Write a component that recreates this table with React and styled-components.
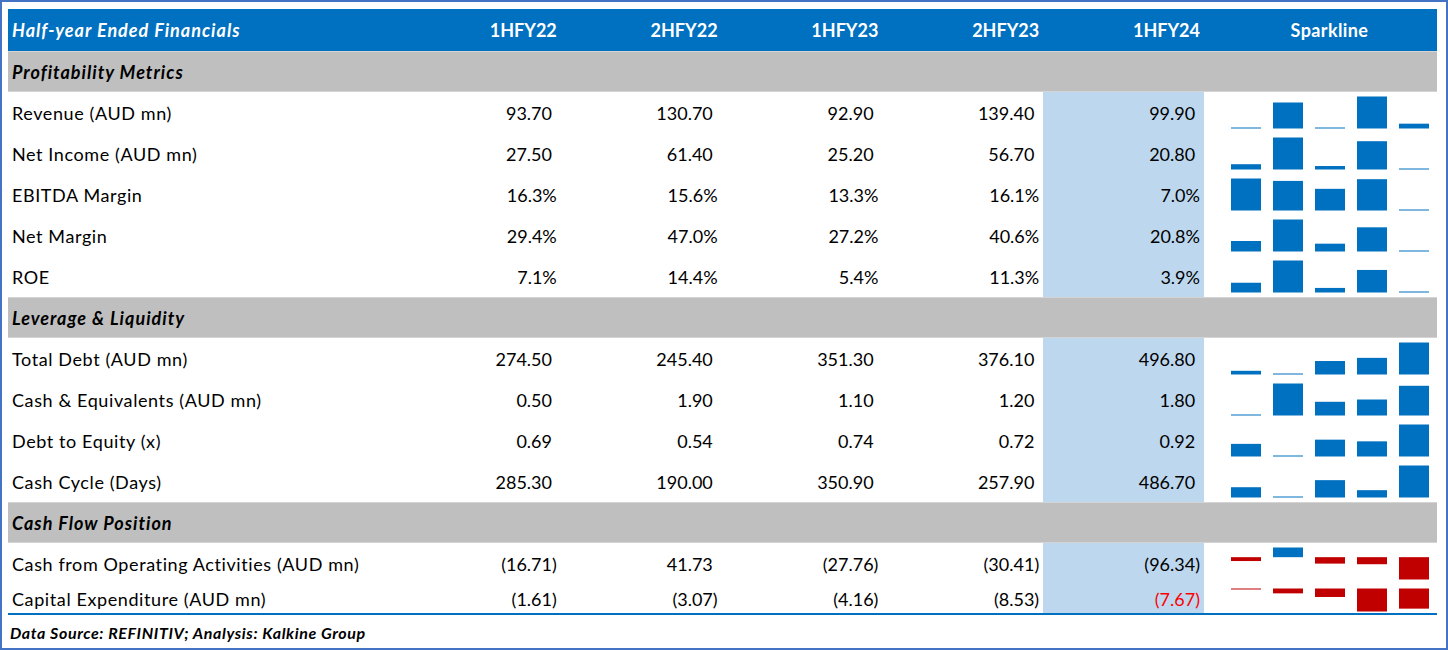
import React from "react";
import styled, { createGlobalStyle } from "styled-components";

const COLS = "392px repeat(5, 160.8px) 233px";
const BLUE = "#0070C0";
const RED = "#C00000";

const periods = ["1HFY22", "2HFY22", "1HFY23", "2HFY23", "1HFY24"];

const sections = [
  {
    title: "Profitability Metrics",
    rows: [
      { label: "Revenue (AUD mn)", values: ["93.70", "130.70", "92.90", "139.40", "99.90"] },
      { label: "Net Income (AUD mn)", values: ["27.50", "61.40", "25.20", "56.70", "20.80"] },
      { label: "EBITDA Margin", values: ["16.3%", "15.6%", "13.3%", "16.1%", "7.0%"] },
      { label: "Net Margin", values: ["29.4%", "47.0%", "27.2%", "40.6%", "20.8%"] },
      { label: "ROE", values: ["7.1%", "14.4%", "5.4%", "11.3%", "3.9%"] },
    ],
  },
  {
    title: "Leverage & Liquidity",
    rows: [
      { label: "Total Debt (AUD mn)", values: ["274.50", "245.40", "351.30", "376.10", "496.80"] },
      { label: "Cash & Equivalents (AUD mn)", values: ["0.50", "1.90", "1.10", "1.20", "1.80"] },
      { label: "Debt to Equity (x)", values: ["0.69", "0.54", "0.74", "0.72", "0.92"] },
      { label: "Cash Cycle (Days)", values: ["285.30", "190.00", "350.90", "257.90", "486.70"] },
    ],
  },
  {
    title: "Cash Flow Position",
    rows: [
      {
        label: "Cash from Operating Activities (AUD mn)",
        values: ["(16.71)", "41.73", "(27.76)", "(30.41)", "(96.34)"],
      },
      {
        label: "Capital Expenditure (AUD mn)",
        values: ["(1.61)", "(3.07)", "(4.16)", "(8.53)", "(7.67)"],
        short: true,
        redLast: true,
      },
    ],
  },
];

const toNumber = (s) => {
  const n = parseFloat(s.replace(/[()%,]/g, ""));
  return s.startsWith("(") ? -n : n;
};

// excel-style column sparkline: min..max scaling, or zero axis when signs mix
function sparkBars(nums, area, top) {
  const max = Math.max(...nums);
  const min = Math.min(...nums);
  const range = max - min || 1;
  if (min >= 0) {
    return nums.map((v) => {
      const h = Math.max(1, ((v - min) / range) * area);
      return { y: top + area - h, h, neg: false };
    });
  }
  if (max <= 0) {
    return nums.map((v) => {
      const h = Math.max(1, ((Math.abs(v) - Math.abs(max)) / range) * area);
      return { y: top, h, neg: true };
    });
  }
  const axis = top + (max / range) * area;
  return nums.map((v) => {
    const h = Math.max(1, (Math.abs(v) / range) * area);
    return v >= 0 ? { y: axis - h, h, neg: false } : { y: axis, h, neg: true };
  });
}

function Sparkline({ values, height }) {
  const nums = values.map(toNumber);
  const area = height > 35 ? 32 : 23;
  const bars = sparkBars(nums, area, 4.5);
  return (
    <svg width="233" height={height}>
      {bars.map((b, i) => (
        <rect
          key={i}
          x={27 + i * 42}
          y={b.y}
          width="30"
          height={b.h}
          fill={b.neg ? RED : BLUE}
        />
      ))}
    </svg>
  );
}

function Value({ text, red }) {
  const plain = !text.startsWith("(") && !text.endsWith("%");
  return (
    <NumCell $highlight={red !== undefined} $red={red}>
      {text}
      {plain && <Pad>)</Pad>}
    </NumCell>
  );
}

export default function App() {
  return (
    <>
      <GlobalStyle />
      <Frame>
        <Table>
          <HeaderRow>
            <HeadLabel>Half-year Ended Financials</HeadLabel>
            {periods.map((p) => (
              <HeadCell key={p}>{p}</HeadCell>
            ))}
            <SparkHead>Sparkline</SparkHead>
          </HeaderRow>
          {sections.map((s) => (
            <React.Fragment key={s.title}>
              <SectionRow>{s.title}</SectionRow>
              {s.rows.map((r) => (
                <DataRow key={r.label} $h={r.short ? 29 : 41}>
                  <Label>{r.label}</Label>
                  {r.values.map((v, i) =>
                    i === 4 ? (
                      <Value key={i} text={v} red={!!r.redLast} />
                    ) : (
                      <Value key={i} text={v} />
                    )
                  )}
                  <Sparkline values={r.values} height={r.short ? 29 : 41} />
                </DataRow>
              ))}
            </React.Fragment>
          ))}
        </Table>
        <Footer>Data Source: REFINITIV; Analysis: Kalkine Group</Footer>
      </Frame>
    </>
  );
}

const GlobalStyle = createGlobalStyle`
  body {
    margin: 0;
    background: #ffffff;
  }
`;

const Frame = styled.div`
  box-sizing: border-box;
  width: 1448px;
  height: 650px;
  border: 2px solid #4472c4;
  padding: 7px 9px 0 6px;
  font-family: "Lato", "Liberation Sans", sans-serif;
  color: #000000;
  background: #ffffff;
`;

const Table = styled.div`
  display: flex;
  flex-direction: column;
  width: 1429px;
  border-bottom: 2px solid ${BLUE};
`;

const Row = styled.div`
  display: grid;
  grid-template-columns: ${COLS};
  height: ${(p) => p.$h || 41}px;
`;

const HeaderRow = styled(Row)`
  height: 42px;
  background: ${BLUE};
  color: #ffffff;
  font-weight: 700;
  font-size: 18px;
`;

const HeadLabel = styled.div`
  display: flex;
  align-items: center;
  padding-left: 4px;
  font-style: italic;
  letter-spacing: 1px;
`;

const HeadCell = styled.div`
  display: flex;
  align-items: center;
  justify-content: flex-end;
  padding-right: 4px;
`;

const SparkHead = styled.div`
  display: flex;
  align-items: center;
  justify-content: center;
  padding-left: 18px;
  letter-spacing: 0.4px;
`;

const SectionRow = styled.div`
  box-sizing: border-box;
  display: flex;
  align-items: center;
  height: 41px;
  padding-left: 4px;
  background: #bfbfbf;
  border-top: 1px solid #d4d4d4;
  border-bottom: 1px solid #d4d4d4;
  font-size: 18px;
  font-weight: 700;
  font-style: italic;
  letter-spacing: 1px;
`;

const DataRow = styled(Row)`
  font-size: 18px;
`;

const Label = styled.div`
  display: flex;
  align-items: center;
  padding-left: 4px;
  white-space: nowrap;
  letter-spacing: 0.6px;
`;

const NumCell = styled.div`
  display: flex;
  align-items: center;
  justify-content: flex-end;
  padding-right: 4px;
  background: ${(p) => (p.$highlight ? "#BDD7EE" : "transparent")};
  color: ${(p) => (p.$red ? "#FF0000" : "inherit")};
`;

const Pad = styled.span`
  visibility: hidden;
`;

const Footer = styled.div`
  padding: 8px 0 0 2px;
  font-size: 16px;
  font-weight: 700;
  font-style: italic;
  letter-spacing: 0.6px;
`;
